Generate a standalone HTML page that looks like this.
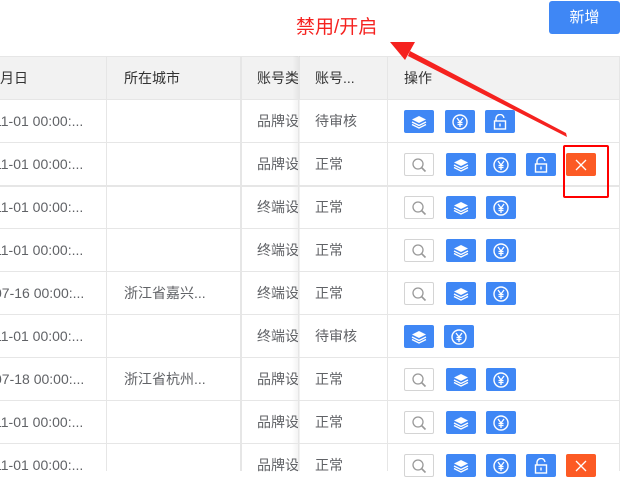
<!DOCTYPE html>
<html><head><meta charset="utf-8"><style>
*{margin:0;padding:0;box-sizing:border-box}
body{width:626px;height:471px;overflow:hidden;background:#fff;position:relative;font-family:"Liberation Sans","Noto Sans CJK SC",sans-serif;font-size:14px;color:#606266}
.a{position:absolute}
.hl{position:absolute;left:0;width:619px;height:1px;background:#e6e6e6}
.vl{position:absolute;width:1px;background:#e6e6e6}
.t{position:absolute;white-space:nowrap;line-height:20px}
.b{position:absolute;width:30px;height:23px;border-radius:2px;background:#3f87f5;display:flex;align-items:center;justify-content:center}
.s{background:#fff;border:1px solid #d4d4d4}
.r{background:#fc5a24}
</style></head><body>
<div class="a" style="left:549px;top:1px;width:71px;height:33px;background:#3f87f5;border-radius:3px;color:#fff;font-size:15px;line-height:33px;text-align:center">新增</div>
<div class="t" style="left:296px;top:16px;color:#f5221f;font-size:19px;line-height:24px">禁用/开启</div>
<div class="a" style="left:0;top:56px;width:619px;height:43px;background:#f2f2f2"></div>
<div class="vl" style="left:619px;top:56px;height:415px"></div>
<div class="hl" style="top:56px"></div>
<div class="vl" style="left:106px;top:56px;height:415px"></div>
<div class="vl" style="left:240px;top:56px;height:415px;width:2px"></div>
<div class="a" style="left:292px;top:56px;width:8px;height:415px;background:linear-gradient(90deg,rgba(0,0,0,0),rgba(0,0,0,.06))"></div>
<div class="vl" style="left:298px;top:56px;height:415px"></div>
<div class="vl" style="left:387px;top:56px;height:415px"></div>
<div class="t" style="left:0;top:68px;color:#333">月日</div>
<div class="t" style="left:124px;top:68px;color:#333">所在城市</div>
<div class="t" style="left:257px;top:68px;color:#333;width:41px;overflow:hidden">账号类型</div>
<div class="t" style="left:315px;top:68px;color:#333">账号...</div>
<div class="t" style="left:404px;top:68px;color:#333">操作</div>
<svg width="0" height="0" style="position:absolute"><defs>
<g id="L"><path d="M8 2L15 5.5 8 9 1 5.5Z" fill="#fff"/><path d="M1 8l7 3.5 7-3.5M1 10.5l7 3.5 7-3.5" stroke="#fff" stroke-width="1.3" fill="none"/></g>
<g id="Y"><circle cx="8" cy="8" r="7" stroke="#fff" stroke-width="1.4" fill="none"/><path d="M5 4l3 4 3-4M8 8v5M5.5 8.5h5M5.5 10.5h5" stroke="#fff" stroke-width="1.3" fill="none"/></g>
<g id="K"><path d="M4 7V5a4 4 0 0 1 8-1" stroke="#fff" stroke-width="1.4" fill="none"/><rect x="2.5" y="7" width="11" height="8" stroke="#fff" stroke-width="1.4" fill="none"/><rect x="7.3" y="9.5" width="1.4" height="3" fill="#fff"/></g>
<g id="S"><circle cx="7" cy="7" r="5" stroke="#999" stroke-width="1.3" fill="none"/><path d="M10.5 10.5l4 4" stroke="#999" stroke-width="1.6"/></g>
<g id="X"><path d="M3 3l10 10M13 3L3 13" stroke="#fff" stroke-width="1.3"/></g>
</defs></svg>

<div class="hl" style="top:99px"></div>
<div class="t" style="left:-6px;top:111px">11-01 00:00:...</div><div class="t" style="left:257px;top:111px;width:41px;overflow:hidden">品牌设计</div><div class="t" style="left:315px;top:111px">待审核</div>
<div class="b" style="left:404px;top:110px"><svg width="16" height="16"><use href="#L"/></svg></div><div class="b" style="left:445px;top:110px"><svg width="16" height="16"><use href="#Y"/></svg></div><div class="b" style="left:485px;top:110px"><svg width="16" height="16"><use href="#K"/></svg></div>

<div class="hl" style="top:142px"></div>
<div class="t" style="left:-6px;top:154px">11-01 00:00:...</div><div class="t" style="left:257px;top:154px;width:41px;overflow:hidden">品牌设计</div><div class="t" style="left:315px;top:154px">正常</div>
<div class="b s" style="left:404px;top:153px"><svg width="16" height="16"><use href="#S"/></svg></div><div class="b" style="left:446px;top:153px"><svg width="16" height="16"><use href="#L"/></svg></div><div class="b" style="left:486px;top:153px"><svg width="16" height="16"><use href="#Y"/></svg></div><div class="b" style="left:526px;top:153px"><svg width="16" height="16"><use href="#K"/></svg></div><div class="b r" style="left:566px;top:153px"><svg width="16" height="16"><use href="#X"/></svg></div>

<div class="hl" style="top:185px;height:2px"></div>
<div class="t" style="left:-6px;top:197px">11-01 00:00:...</div><div class="t" style="left:257px;top:197px;width:41px;overflow:hidden">终端设计</div><div class="t" style="left:315px;top:197px">正常</div>
<div class="b s" style="left:404px;top:196px"><svg width="16" height="16"><use href="#S"/></svg></div><div class="b" style="left:446px;top:196px"><svg width="16" height="16"><use href="#L"/></svg></div><div class="b" style="left:486px;top:196px"><svg width="16" height="16"><use href="#Y"/></svg></div>

<div class="hl" style="top:228px"></div>
<div class="t" style="left:-6px;top:240px">11-01 00:00:...</div><div class="t" style="left:257px;top:240px;width:41px;overflow:hidden">终端设计</div><div class="t" style="left:315px;top:240px">正常</div>
<div class="b s" style="left:404px;top:239px"><svg width="16" height="16"><use href="#S"/></svg></div><div class="b" style="left:446px;top:239px"><svg width="16" height="16"><use href="#L"/></svg></div><div class="b" style="left:486px;top:239px"><svg width="16" height="16"><use href="#Y"/></svg></div>

<div class="hl" style="top:271px"></div>
<div class="t" style="left:-6px;top:283px">07-16 00:00:...</div><div class="t" style="left:124px;top:283px">浙江省嘉兴...</div><div class="t" style="left:257px;top:283px;width:41px;overflow:hidden">终端设计</div><div class="t" style="left:315px;top:283px">正常</div>
<div class="b s" style="left:404px;top:282px"><svg width="16" height="16"><use href="#S"/></svg></div><div class="b" style="left:446px;top:282px"><svg width="16" height="16"><use href="#L"/></svg></div><div class="b" style="left:486px;top:282px"><svg width="16" height="16"><use href="#Y"/></svg></div>

<div class="hl" style="top:314px"></div>
<div class="t" style="left:-6px;top:326px">11-01 00:00:...</div><div class="t" style="left:257px;top:326px;width:41px;overflow:hidden">终端设计</div><div class="t" style="left:315px;top:326px">待审核</div>
<div class="b" style="left:404px;top:325px"><svg width="16" height="16"><use href="#L"/></svg></div><div class="b" style="left:444px;top:325px"><svg width="16" height="16"><use href="#Y"/></svg></div>

<div class="hl" style="top:357px"></div>
<div class="t" style="left:-6px;top:369px">07-18 00:00:...</div><div class="t" style="left:124px;top:369px">浙江省杭州...</div><div class="t" style="left:257px;top:369px;width:41px;overflow:hidden">品牌设计</div><div class="t" style="left:315px;top:369px">正常</div>
<div class="b s" style="left:404px;top:368px"><svg width="16" height="16"><use href="#S"/></svg></div><div class="b" style="left:446px;top:368px"><svg width="16" height="16"><use href="#L"/></svg></div><div class="b" style="left:486px;top:368px"><svg width="16" height="16"><use href="#Y"/></svg></div>

<div class="hl" style="top:400px"></div>
<div class="t" style="left:-6px;top:412px">11-01 00:00:...</div><div class="t" style="left:257px;top:412px;width:41px;overflow:hidden">品牌设计</div><div class="t" style="left:315px;top:412px">正常</div>
<div class="b s" style="left:404px;top:411px"><svg width="16" height="16"><use href="#S"/></svg></div><div class="b" style="left:446px;top:411px"><svg width="16" height="16"><use href="#L"/></svg></div><div class="b" style="left:486px;top:411px"><svg width="16" height="16"><use href="#Y"/></svg></div>

<div class="hl" style="top:443px"></div>
<div class="t" style="left:-6px;top:455px">11-01 00:00:...</div><div class="t" style="left:257px;top:455px;width:41px;overflow:hidden">品牌设计</div><div class="t" style="left:315px;top:455px">正常</div>
<div class="b s" style="left:404px;top:454px"><svg width="16" height="16"><use href="#S"/></svg></div><div class="b" style="left:446px;top:454px"><svg width="16" height="16"><use href="#L"/></svg></div><div class="b" style="left:486px;top:454px"><svg width="16" height="16"><use href="#Y"/></svg></div><div class="b" style="left:526px;top:454px"><svg width="16" height="16"><use href="#K"/></svg></div><div class="b r" style="left:566px;top:454px"><svg width="16" height="16"><use href="#X"/></svg></div>

<div class="a" style="left:563px;top:145px;width:46px;height:53px;border:2px solid #f00;border-radius:2px"></div>
<svg class="a" style="left:0;top:0" width="626" height="471">
<path d="M567 137L566 133 410 51 408 56Z" fill="#f5221f"/>
<path d="M390 42L415 42 405 60Z" fill="#f5221f"/>
</svg>
</body></html>
